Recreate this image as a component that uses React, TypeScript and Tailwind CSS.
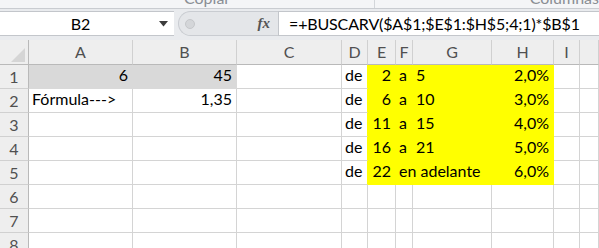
import React from "react";

type Cell = { t?: string; r?: boolean; fill?: "y" | "g"; over?: boolean };

const COLS = ["A", "B", "C", "D", "E", "F", "G", "H", "I", ""];

const rows: Cell[][] = [
  [{ t: "6", r: true, fill: "g" }, { t: "45", r: true, fill: "g" }, {}, { t: "de" }, { t: "2", r: true, fill: "y" }, { t: "a", fill: "y" }, { t: "5", fill: "y" }, { t: "2,0%", r: true, fill: "y" }, {}, {}],
  [{ t: "Fórmula--->" }, { t: "1,35", r: true }, {}, { t: "de" }, { t: "6", r: true, fill: "y" }, { t: "a", fill: "y" }, { t: "10", fill: "y" }, { t: "3,0%", r: true, fill: "y" }, {}, {}],
  [{}, {}, {}, { t: "de" }, { t: "11", r: true, fill: "y" }, { t: "a", fill: "y" }, { t: "15", fill: "y" }, { t: "4,0%", r: true, fill: "y" }, {}, {}],
  [{}, {}, {}, { t: "de" }, { t: "16", r: true, fill: "y" }, { t: "a", fill: "y" }, { t: "21", fill: "y" }, { t: "5,0%", r: true, fill: "y" }, {}, {}],
  [{}, {}, {}, { t: "de" }, { t: "22", r: true, fill: "y" }, { t: "en adelante", fill: "y", over: true }, { fill: "y" }, { t: "6,0%", r: true, fill: "y" }, {}, {}],
  [{}, {}, {}, {}, {}, {}, {}, {}, {}, {}],
  [{}, {}, {}, {}, {}, {}, {}, {}, {}, {}],
  [{}, {}, {}, {}, {}, {}, {}, {}, {}, {}],
];

function cellClass(c: Cell, nextFill: boolean) {
  const base = "flex items-end pb-[1px] whitespace-nowrap border-b border-r";
  let color = "bg-white border-[#d4d4d4]";
  if (c.fill === "y") color = "bg-[#ffff00] border-[#ffff00]";
  if (c.fill === "g") color = "bg-[#d9d9d9] border-[#d9d9d9]";
  const rightEdge = !c.fill && nextFill ? " border-r-[#ffff00]" : "";
  const align = c.r ? " justify-end pr-[4px]" : " justify-start pl-[3px]";
  const over = c.over ? " overflow-visible" : " overflow-hidden";
  return `${base} ${color}${rightEdge}${align}${over}`;
}

export default function App() {
  return (
    <div
      className="w-[599px] h-[248px] overflow-hidden bg-white flex flex-col text-black"
      style={{ fontFamily: "Lato, 'Liberation Sans', sans-serif" }}
    >
      {/* ribbon edge */}
      <div className="h-[9px] shrink-0 flex bg-[#f4f5f7] border-b border-[#c9ccd1] overflow-hidden text-[16px] text-[#8a8e94] leading-none">
        <div className="w-[408px] border-r border-[#d3d6da] pl-[184px]">
          <span className="block -mt-[10px]">Copiar</span>
        </div>
        <div className="flex-1 pl-[155px]">
          <span className="block -mt-[10px]">Columnas</span>
        </div>
      </div>

      {/* formula bar */}
      <div className="h-[31px] shrink-0 bg-[#e9ebee] flex items-start pt-[2px]">
        <div className="w-[174px] h-[25px] bg-white border-y border-[#c3c6cb] flex items-center">
          <div className="flex-1 text-center text-[16px] pl-[2px]">B2</div>
          <svg width="9" height="6" viewBox="0 0 9 6" className="mr-[6px]">
            <path d="M0 0 L9 0 L4.5 5.5 Z" fill="#3c3c3c" />
          </svg>
        </div>
        <div className="w-[104px] h-[25px] flex items-center">
          <div className="ml-[4px] h-[25px] flex-1 bg-[#e4e6e9] rounded-l-full border border-r-0 border-[#c9ccd1] flex items-center">
            <div className="w-[10px] h-[10px] rounded-full ml-[6px] bg-[#d4d6d9] border border-[#c5c7ca]" />
            <span
              className="ml-auto mr-[8px] text-[15px] italic font-bold text-[#555]"
              style={{ fontFamily: "'Liberation Serif', serif" }}
            >
              fx
            </span>
          </div>
        </div>
        <div className="flex-1 h-[25px] bg-white border-y border-l border-[#c3c6cb] flex items-center pl-[10px] text-[16px] tracking-[-0.15px] whitespace-nowrap">
          =+BUSCARV($A$1;$E$1:$H$5;4;1)*$B$1
        </div>
      </div>

      {/* sheet */}
      <div className="grid grid-cols-[29px_104px_104px_105px_26px_28px_17px_79px_62px_26px_1fr] grid-rows-[25px_repeat(8,24px)] text-[16px]">
        {/* corner */}
        <div className="bg-[#eeeeee] border-b border-r border-[#b9b9b9] flex items-end justify-end pr-[3px] pb-[2px]">
          <svg width="14" height="14" viewBox="0 0 14 14">
            <path d="M14 0 L14 14 L0 14 Z" fill="#d5d5d5" />
          </svg>
        </div>
        {COLS.map((c, i) => (
          <div
            key={i}
            className="bg-[#eeeeee] border-b border-r border-b-[#b9b9b9] border-r-[#d0d0d0] flex items-center justify-center text-[#505050] pb-[1px]"
          >
            {c}
          </div>
        ))}

        {rows.map((row, ri) => (
          <React.Fragment key={ri}>
            <div className="bg-[#eeeeee] border-b border-r border-b-[#d0d0d0] border-r-[#b9b9b9] flex items-center justify-center text-[#505050]">
              {ri + 1}
            </div>
            {row.map((c, ci) => (
              <div key={ci} className={cellClass(c, !!row[ci + 1]?.fill)}>
                {c.over ? <span className="relative z-[1]">{c.t}</span> : c.t}
              </div>
            ))}
          </React.Fragment>
        ))}
      </div>
    </div>
  );
}
